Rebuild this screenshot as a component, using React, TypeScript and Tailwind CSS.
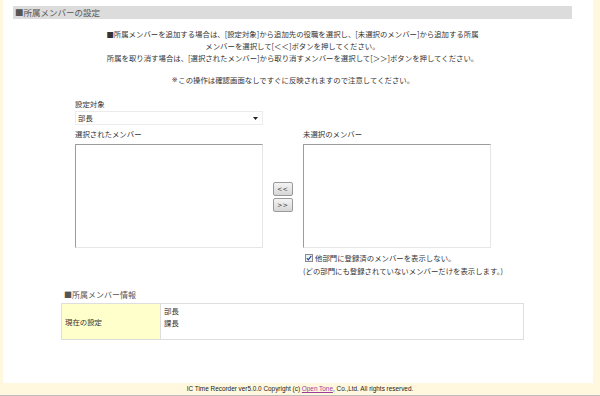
import React from "react";

const jp = "font-['Noto_Sans_CJK_JP','Noto_Sans',sans-serif]";

const ListBox = () => (
  <div className="h-[104px] w-[188px] border border-t-[#9c9c9c] border-l-[#9c9c9c] border-r-[#e6e6e6] border-b-[#e6e6e6] bg-white" />
);

const MoveButton = ({ label }: { label: string }) => (
  <button className="flex h-[14px] w-[20px] items-center justify-center rounded-[2px] border border-[#9a9a9a] bg-gradient-to-b from-[#f4f4f4] to-[#d6d6d6] text-[8px] leading-none tracking-[1px] text-[#333]">
    {label}
  </button>
);

const App = () => {
  return (
    <div className={`flex h-[396px] w-[600px] flex-col bg-[#fff8de] text-[#333] ${jp}`}>
      <div className="ml-[3px] flex h-[383px] w-[590px] flex-col bg-white">
        {/* title bar */}
        <div className="ml-[10px] mt-[6px] flex h-[13px] w-[559px] items-center bg-[#dcdcdc] pl-[2px] text-[8.5px] text-[#555]">
          ■所属メンバーの設定
        </div>

        {/* instructions */}
        <div className="ml-[10px] w-[559px] pt-[9px] text-center text-[7.4px] leading-[12px] text-[#333]">
          <p>
            ■所属メンバーを追加する場合は、[設定対象]から追加先の役職を選択し、[未選択のメンバー]から追加する所属
            <br />
            メンバーを選択して[＜＜]ボタンを押してください。
          </p>
          <p>所属を取り消す場合は、[選択されたメンバー]から取り消すメンバーを選択して[＞＞]ボタンを押してください。</p>
          <p className="mt-[10px] h-[12px]">
            <span className="inline-block h-[12px] w-[7.4px] align-top font-['DejaVu_Sans'] text-[7px] leading-[12px] text-[#333]">※</span>
            この操作は確認画面なしですぐに反映されますので注意してください。
          </p>
        </div>

        {/* member selection */}
        <div className="ml-[72px] mt-[13px] text-[7.4px] leading-[10px]">
          <div>設定対象</div>
          <div className="mt-[2px] flex h-[14px] w-[188px] items-center justify-between border border-[#ececec] bg-white pl-[2px] pr-[4px]">
            <span>部長</span>
            <svg width="5" height="3" viewBox="0 0 5 3">
              <path d="M0 0h5L2.5 3z" fill="#222" />
            </svg>
          </div>

          <div className="mt-[4px] flex">
            <div className="flex flex-col">
              <div className="mb-[5px]">選択されたメンバー</div>
              <ListBox />
            </div>
            <div className="mx-[10px] flex flex-col gap-[2px] pt-[53px]">
              <MoveButton label="<<" />
              <MoveButton label=">>" />
            </div>
            <div className="flex flex-col">
              <div className="mb-[5px]">未選択のメンバー</div>
              <ListBox />
              <div className="mt-[5px] flex items-center gap-[2px] pl-[2px]">
                <svg width="8" height="8" viewBox="0 0 8 8">
                  <rect x="0.5" y="0.5" width="7" height="7" fill="#eef2f8" stroke="#8a8a8a" />
                  <path d="M1.8 4.2l1.5 1.6 3-4" fill="none" stroke="#2c4aa0" strokeWidth="1.2" />
                </svg>
                <span>他部門に登録済のメンバーを表示しない。</span>
              </div>
              <div className="mt-[3px]">(どの部門にも登録されていないメンバーだけを表示します。)</div>
            </div>
          </div>
        </div>

        {/* member info */}
        <div className="ml-[58px] mt-[14px] text-[7.4px]">
          <div className="pl-[3px] text-[8px] leading-[10px] text-[#555]">■所属メンバー情報</div>
          <div className="mt-[3px] flex h-[37px] w-[463px] gap-[1px] border border-[#dedede] bg-[#dedede]">
            <div className="flex w-[98px] items-center bg-[#ffffcc] pl-[3px]">現在の設定</div>
            <div className="flex-1 bg-white pl-[3px] pt-[1px] leading-[12px]">
              <div>部長</div>
              <div>課長</div>
            </div>
          </div>
        </div>
      </div>

      {/* footer */}
      <div className="flex h-[12px] items-center justify-center font-['Liberation_Sans',sans-serif] text-[6.4px] text-[#222]">
        IC Time Recorder ver5.0.0 Copyright (c)&nbsp;
        <a className="text-[#9b3c9b] underline">Open Tone</a>, Co.,Ltd. All rights reserved.
      </div>
      <div className="h-[1px] bg-[#bdbdbd]" />
    </div>
  );
};

export default App;
